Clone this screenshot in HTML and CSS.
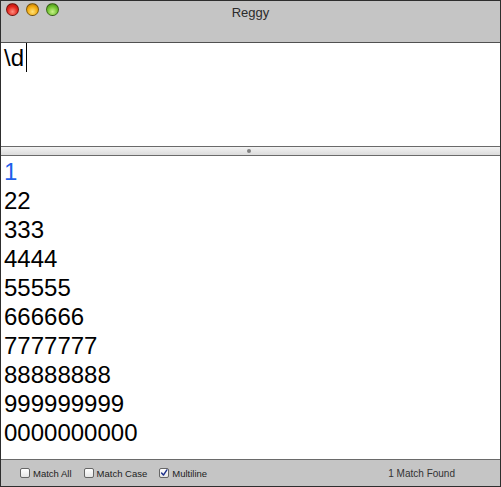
FILE: index.html
```html
<!DOCTYPE html>
<html>
<head>
<meta charset="utf-8">
<link rel="stylesheet" href="styles.css">
</head>
<body>
<div class="window">
  <div class="titlebar">
    <div class="lights">
      <span class="light red"></span>
      <span class="light yellow"></span>
      <span class="light green"></span>
    </div>
    <div class="title">Reggy</div>
  </div>
  <div class="pattern"><span class="ptext">\d</span><span class="caret"></span></div>
  <div class="splitter"><span class="dimple"></span></div>
  <div class="results">
    <div class="line match">1</div>
    <div class="line">22</div>
    <div class="line">333</div>
    <div class="line">4444</div>
    <div class="line">55555</div>
    <div class="line">666666</div>
    <div class="line">7777777</div>
    <div class="line">88888888</div>
    <div class="line">999999999</div>
    <div class="line">0000000000</div>
  </div>
  <div class="statusbar">
    <label class="opt"><span class="box"></span>Match All</label>
    <label class="opt"><span class="box"></span>Match Case</label>
    <label class="opt"><span class="box checked"><svg width="10" height="10" viewBox="0 0 10 10"><path d="M2 5 L4.3 7.6 L8.6 1.2" fill="none" stroke="#1c2f8a" stroke-width="1.8" stroke-linecap="round" stroke-linejoin="round"/></svg></span>Multiline</label>
    <span class="count">1 Match Found</span>
  </div>
</div>
</body>
</html>
```

FILE: styles.css
```css
html, body {
  margin: 0;
  padding: 0;
  background: #ffffff;
}
.window {
  width: 501px;
  height: 487px;
  box-sizing: border-box;
  border: 1px solid #2e2e2e;
  display: flex;
  flex-direction: column;
  font-family: "Liberation Sans", Arial, sans-serif;
  overflow: hidden;
}
.titlebar {
  height: 41px;
  flex: none;
  background: #c5c5c5;
  border-bottom: 1px solid #505050;
  position: relative;
}
.lights {
  display: flex;
  gap: 7px;
  padding: 2px 0 0 5px;
}
.light {
  width: 13px;
  height: 13px;
  border-radius: 50%;
  box-sizing: border-box;
  border: 1px solid rgba(0,0,0,0.45);
}
.red { background: radial-gradient(circle at 50% 70%, #ff8f80 0%, #e2231b 55%, #a1120c 100%); }
.yellow { background: radial-gradient(circle at 50% 70%, #ffe27a 0%, #f1a90c 55%, #a6670a 100%); }
.green { background: radial-gradient(circle at 50% 70%, #c8f28a 0%, #6ec02c 55%, #3a7a13 100%); }
.title {
  position: absolute;
  left: 0;
  right: 0;
  top: 4px;
  text-align: center;
  font-size: 13px;
  color: #2b2b2b;
}
.pattern {
  height: 103px;
  flex: none;
  background: #fff;
  padding: 0 0 0 3px;
  box-sizing: border-box;
  display: flex;
  align-items: flex-start;
}
.ptext {
  font-size: 24px;
  line-height: 28px;
  margin-top: 1px;
  color: #000;
}
.caret {
  width: 1px;
  height: 29px;
  background: #000;
  margin-left: 2px;
}
.splitter {
  height: 8px;
  flex: none;
  border-top: 1px solid #6a6a6a;
  border-bottom: 1px solid #6a6a6a;
  background: linear-gradient(#f2f2f2, #dcdcdc);
  display: flex;
  justify-content: center;
  align-items: center;
}
.dimple {
  width: 4px;
  height: 4px;
  border-radius: 50%;
  background: #808080;
  margin-left: -4px;
}
.results {
  flex: 1;
  background: #fff;
  padding: 1px 0 0 3px;
}
.line {
  font-size: 24px;
  line-height: 29px;
  color: #000;
}
.match { color: #1f5fea; }
.statusbar {
  height: 26px;
  flex: none;
  background: #c5c5c5;
  border-top: 1px solid #6a6a6a;
  display: flex;
  align-items: center;
  padding-left: 19px;
  font-size: 9.5px;
  color: #222;
}
.opt {
  display: flex;
  align-items: center;
  margin-right: 12px;
}
.box {
  width: 10px;
  height: 10px;
  box-sizing: border-box;
  border: 1px solid #666;
  border-radius: 2px;
  background: linear-gradient(#ffffff, #e6e6e6);
  margin-right: 3px;
  display: flex;
  align-items: center;
  justify-content: center;
}
.box svg { display: block; }
.count {
  margin-left: auto;
  margin-right: 45px;
  font-size: 10px;
  color: #333;
}
```
